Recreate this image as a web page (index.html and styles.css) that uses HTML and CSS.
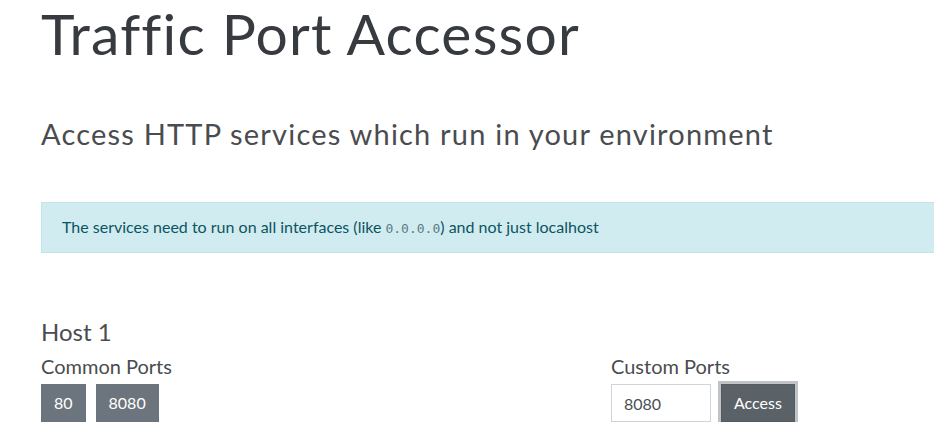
FILE: index.html
```html
<!DOCTYPE html>
<html lang="en">
<head>
<meta charset="utf-8">
<title>Traffic Port Accessor</title>
<link rel="stylesheet" href="styles.css">
</head>
<body>
<main class="container">
  <h1 class="title">Traffic Port Accessor</h1>
  <h2 class="subtitle">Access HTTP services which run in your environment</h2>
  <div class="alert">The services need to run on all interfaces (like <code>0.0.0.0</code>) and not just localhost</div>
  <section class="host">
    <h4 class="host-name">Host 1</h4>
    <div class="row">
      <div class="col">
        <h5 class="label">Common Ports</h5>
        <div class="btns">
          <button class="btn">80</button>
          <button class="btn">8080</button>
        </div>
      </div>
      <div class="col">
        <h5 class="label">Custom Ports</h5>
        <form class="inline">
          <input class="input" type="text" value="8080">
          <button type="button" class="btn btn-focus">Access</button>
        </form>
      </div>
    </div>
  </section>
</main>
</body>
</html>
```

FILE: styles.css
```css
html, body {
  margin: 0;
  padding: 0;
  background: #ffffff;
  overflow: hidden;
}
body {
  font-family: "Lato", "Noto Sans", sans-serif;
  color: #3a3d42;
  font-size: 16px;
}
.container {
  width: 1110px;
  padding-left: 41px;
}
.title {
  margin: 0;
  font-size: 57px;
  line-height: 67px;
  letter-spacing: 1.2px;
  font-weight: 400;
  color: #373a3f;
}
.subtitle {
  margin: 50px 0 0;
  font-size: 29px;
  line-height: 34px;
  letter-spacing: 1.2px;
  font-weight: 400;
  color: #4a4c50;
}
.alert {
  margin-top: 51px;
  padding: 12px 20px;
  line-height: 23px;
  border: 1px solid #bee5eb;
  background: #d1ecf1;
  color: #0c5460;
  font-size: 16px;
}
.alert code {
  font-family: "DejaVu Sans Mono", monospace;
  font-size: 13px;
  color: #5a7b85;
}
.host {
  margin-top: 64px;
}
.host-name {
  margin: 0;
  font-size: 24px;
  line-height: 29px;
  font-weight: 400;
  color: #4a4c50;
}
.row {
  display: flex;
  margin-top: 8px;
}
.col {
  flex: none;
  width: 570px;
}
.label {
  margin: 0 0 6px;
  font-size: 20px;
  line-height: 24px;
  font-weight: 400;
  color: #4a4c50;
}
.btns {
  display: flex;
  gap: 10px;
}
.btn {
  font-family: inherit;
  font-size: 16px;
  line-height: 24px;
  padding: 6px 12px;
  border: 1px solid #6c757d;
  background: #6c757d;
  color: #ffffff;
  border-radius: 0;
}
.inline {
  display: flex;
  align-items: center;
  gap: 10px;
  margin: 0;
}
.input {
  box-sizing: border-box;
  width: 100px;
  height: 38px;
  padding: 6px 12px;
  border: 1px solid #ced4da;
  font-family: inherit;
  font-size: 16px;
  color: #495057;
  border-radius: 0;
  outline: none;
}
.btn-focus {
  background: #5a6268;
  border-color: #545b62;
  box-shadow: 0 0 0 3px rgba(130, 138, 145, 0.5);
}
```
